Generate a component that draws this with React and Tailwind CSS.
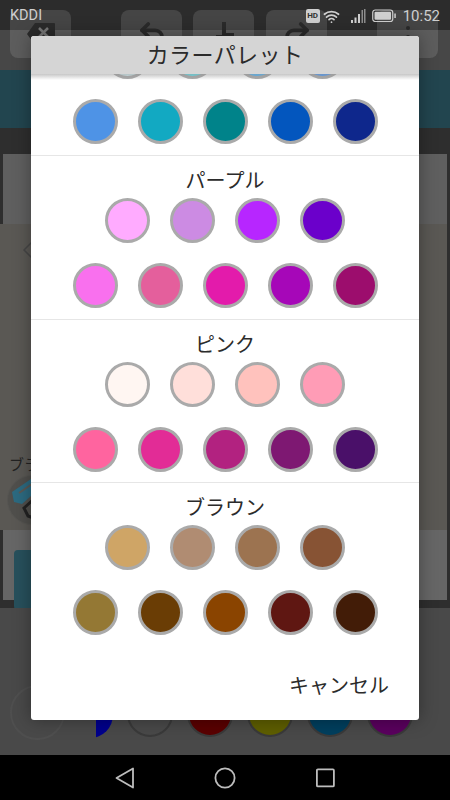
import React from "react";
import { Undo2, Redo2, Wifi } from "lucide-react";

const sections = [
  {
    title: "パープル",
    top: ["#ffabff", "#cc8be3", "#b726ff", "#6b00cb"],
    bottom: ["#f970ee", "#e45f9c", "#e31bab", "#a607b8", "#9c0d6d"],
  },
  {
    title: "ピンク",
    top: ["#fff6f2", "#ffdfda", "#ffc2bd", "#ff9cb6"],
    bottom: ["#ff649f", "#e22c96", "#b22280", "#7e1872", "#4a1069"],
  },
  {
    title: "ブラウン",
    top: ["#cfa566", "#b08c72", "#9c7350", "#875334"],
    bottom: ["#947834", "#6a3d05", "#8a4400", "#5f1712", "#421c07"],
  },
];

const Swatch = ({ color }) => (
  <div
    className="w-[45px] h-[45px] rounded-full border-[3px] border-[#aaaaaa] shrink-0"
    style={{ backgroundColor: color }}
  />
);

const SwatchRow = ({ colors }) => (
  <div className="flex justify-center gap-5 h-[45px]">
    {colors.map((color, i) => (
      <Swatch key={i} color={color} />
    ))}
  </div>
);

const ToolButton = ({ className, children }) => (
  <div
    className={`w-[61px] h-12 rounded-lg bg-white/[0.12] flex items-center justify-center ${className}`}
  >
    {children}
  </div>
);

function StatusBar() {
  return (
    <div className="absolute top-0 left-0 right-0 h-[30px] flex items-center pl-[10px] pr-[10px] pt-[2px] text-[#cfcfcf] font-['Roboto',sans-serif]">
      <span className="text-[14.5px]">KDDI</span>
      <div className="ml-auto flex items-center">
        <span className="w-[14px] h-[14px] rounded-[2px] bg-[#cfcfcf] text-[#333333] text-[8px] font-bold leading-[14px] text-center">
          HD
        </span>
        <Wifi size={17} strokeWidth={2.4} className="ml-[3px]" />
        <svg width="16" height="16" viewBox="0 0 16 16" className="ml-[10px]" fill="#cfcfcf">
          <rect x="1" y="12" width="2" height="3" />
          <rect x="4.5" y="9.5" width="2" height="5.5" />
          <rect x="8" y="6" width="2" height="9" />
          <rect x="11.5" y="2" width="1.5" height="13" opacity="0.6" />
          <rect x="14" y="1" width="1.5" height="14" opacity="0.6" />
        </svg>
        <svg width="24" height="14" viewBox="0 0 24 14" className="ml-[6px]">
          <rect x="0.75" y="1" width="20" height="11.5" rx="2.5" fill="none" stroke="#cfcfcf" strokeWidth="1.2" />
          <rect x="2.5" y="2.8" width="16.5" height="8" rx="1" fill="#cfcfcf" />
          <rect x="22.3" y="4.5" width="1.5" height="4.5" fill="#cfcfcf" />
        </svg>
        <span className="ml-[7px] text-[15px]">10:52</span>
      </div>
    </div>
  );
}

function Toolbar() {
  return (
    <div className="h-[70px] pt-[10px] pl-[10px] flex items-start bg-[linear-gradient(#2c2c2c_30px,#474747_30px)]">
      <ToolButton>
        <svg width="30" height="24" viewBox="0 0 30 24">
          <path d="M9 1h19a1 1 0 0 1 1 1v20a1 1 0 0 1-1 1H9L1 12z" fill="#2a2a2a" />
          <path d="M13 6l9 9M22 6l-9 9" stroke="#777777" strokeWidth="2.5" />
        </svg>
      </ToolButton>
      <ToolButton className="ml-[50px]">
        <Undo2 size={30} strokeWidth={3} className="text-[#2a2a2a]" />
      </ToolButton>
      <ToolButton className="ml-[11px]">
        <svg width="26" height="28" viewBox="0 0 26 28" fill="#2a2a2a">
          <path d="M11 2h4v11h8v13H5V15h6z" />
        </svg>
      </ToolButton>
      <ToolButton className="ml-[12px]">
        <Redo2 size={30} strokeWidth={3} className="text-[#2a2a2a]" />
      </ToolButton>
      <ToolButton className="ml-[50px]">
        <div className="flex flex-col gap-[5px] pt-[5px]">
          <span className="w-[4px] h-[4px] rounded-full bg-[#2a2a2a]" />
          <span className="w-[4px] h-[4px] rounded-full bg-[#2a2a2a]" />
          <span className="w-[4px] h-[4px] rounded-full bg-[#2a2a2a]" />
        </div>
      </ToolButton>
    </div>
  );
}

function Canvas() {
  return (
    <div className="h-[454px] bg-[#2e2e2e] flex flex-col">
      <div className="h-[70px] mx-[3px] bg-[#5f5f5f]" />
      <div className="h-[306px] mr-[3px] bg-[#5a5854] flex flex-col pl-[9px]">
        <svg width="10" height="18" viewBox="0 0 10 18" className="mt-[17px] ml-[14px]" fill="none" stroke="#464646" strokeWidth="1.5">
          <path d="M9 1L1 9l8 8" />
        </svg>
        <span className="mt-[195px] text-[15px] leading-5 text-[#222222]">ブラシ</span>
        <div className="mt-[1px] -ml-[2px] w-[50px] h-[50px] rounded-full bg-[#504f4c] border border-[#565552] flex items-center justify-center">
          <svg width="44" height="44" viewBox="0 0 44 44">
            <path d="M2 14L21 1l9 9-18 16-8-2z" fill="#2c6a80" />
            <path d="M9 15L22 6" stroke="#5a5854" strokeWidth="2" />
            <path d="M14 30l10-9 10 9-8 11-8-3z" fill="none" stroke="#222222" strokeWidth="3" />
          </svg>
        </div>
      </div>
      <div className="h-[70px] mx-[3px] bg-[#666666] relative">
        <div className="absolute top-5 left-[11px] w-[80px] h-[60px] rounded bg-[#27505c]" />
      </div>
      <div className="h-2" />
    </div>
  );
}

function ColorBar() {
  return (
    <div className="h-[147px] bg-[#494949] relative">
      <div className="absolute left-[10px] top-[77px] w-[55px] h-[55px] rounded-full border-2 border-[#4f4f4f]" />
      <div className="absolute left-[96px] top-[84px] w-[17px] h-[46px] overflow-hidden">
        <div className="w-[46px] h-[46px] -ml-[29px] rounded-full bg-[#00008c]" />
      </div>
      <div className="absolute left-[127px] top-[83px] flex gap-[14px]">
        {["#494949", "#5a0000", "#5e5e00", "#003f5e", "#5a005e"].map((color) => (
          <div
            key={color}
            className="w-[46px] h-[46px] rounded-full border-2 border-[#3a3a3a]"
            style={{ backgroundColor: color }}
          />
        ))}
      </div>
    </div>
  );
}

function NavBar() {
  return (
    <div className="h-[45px] bg-black flex items-center justify-center gap-20">
      <svg width="20" height="22" viewBox="0 0 20 22" fill="none" stroke="#bdbdbd" strokeWidth="1.8" strokeLinejoin="round">
        <path d="M19 1.5v19L2.5 11z" />
      </svg>
      <svg width="22" height="22" viewBox="0 0 22 22" fill="none" stroke="#bdbdbd" strokeWidth="1.8">
        <circle cx="11" cy="11" r="9.6" />
      </svg>
      <svg width="20" height="20" viewBox="0 0 20 20" fill="none" stroke="#bdbdbd" strokeWidth="1.8">
        <rect x="0.9" y="1.4" width="17" height="17" rx="1" />
      </svg>
    </div>
  );
}

function PaletteDialog() {
  return (
    <div className="absolute left-[31px] top-9 w-[388px] h-[684px] rounded-[3px] bg-white flex flex-col overflow-hidden shadow-[0_0_18px_rgba(0,0,0,0.35)] text-[#2b2b2b]">
      <div className="relative z-10 h-[38px] shrink-0 bg-[#d5d5d5] text-[22px] tracking-[0.4px] leading-[35px] text-center">
        カラーパレット
        <div className="absolute top-full left-0 right-0 h-[6px] bg-gradient-to-b from-[#8f8f8f]/50 to-transparent" />
      </div>
      <div className="flex flex-col -mt-[40px]">
        <div className="flex flex-col gap-5 pb-[11px]">
          <SwatchRow colors={["#d8f3f7", "#62e6f2", "#4db8ff", "#4a9bff"]} />
          <SwatchRow colors={["#4e93e6", "#12a9c2", "#00838a", "#0356be", "#0e278c"]} />
        </div>
        {sections.map((section, i) => (
          <div
            key={section.title}
            className={`border-t border-[#e6e6e6] ${i === 0 ? "pb-[11px]" : "pb-[10px]"}`}
          >
            <div className="h-[42px] pt-[9px] text-[20px] leading-[30px] text-center">
              {section.title}
            </div>
            <div className="flex flex-col gap-5">
              <SwatchRow colors={section.top} />
              <SwatchRow colors={section.bottom} />
            </div>
          </div>
        ))}
      </div>
      <div className="mt-auto h-[70px] pr-[30px] flex justify-end text-[20px] leading-[30px] pt-5">
        キャンセル
      </div>
    </div>
  );
}

export default function App() {
  return (
    <div className="relative w-[450px] h-[800px] overflow-hidden font-['Noto_Sans_CJK_JP','Noto_Sans',sans-serif]">
      <Toolbar />
      <div className="h-[58px] bg-[#22454f]" />
      <div className="h-[26px] bg-[#2e2e2e]" />
      <Canvas />
      <ColorBar />
      <NavBar />
      <StatusBar />
      <PaletteDialog />
    </div>
  );
}
